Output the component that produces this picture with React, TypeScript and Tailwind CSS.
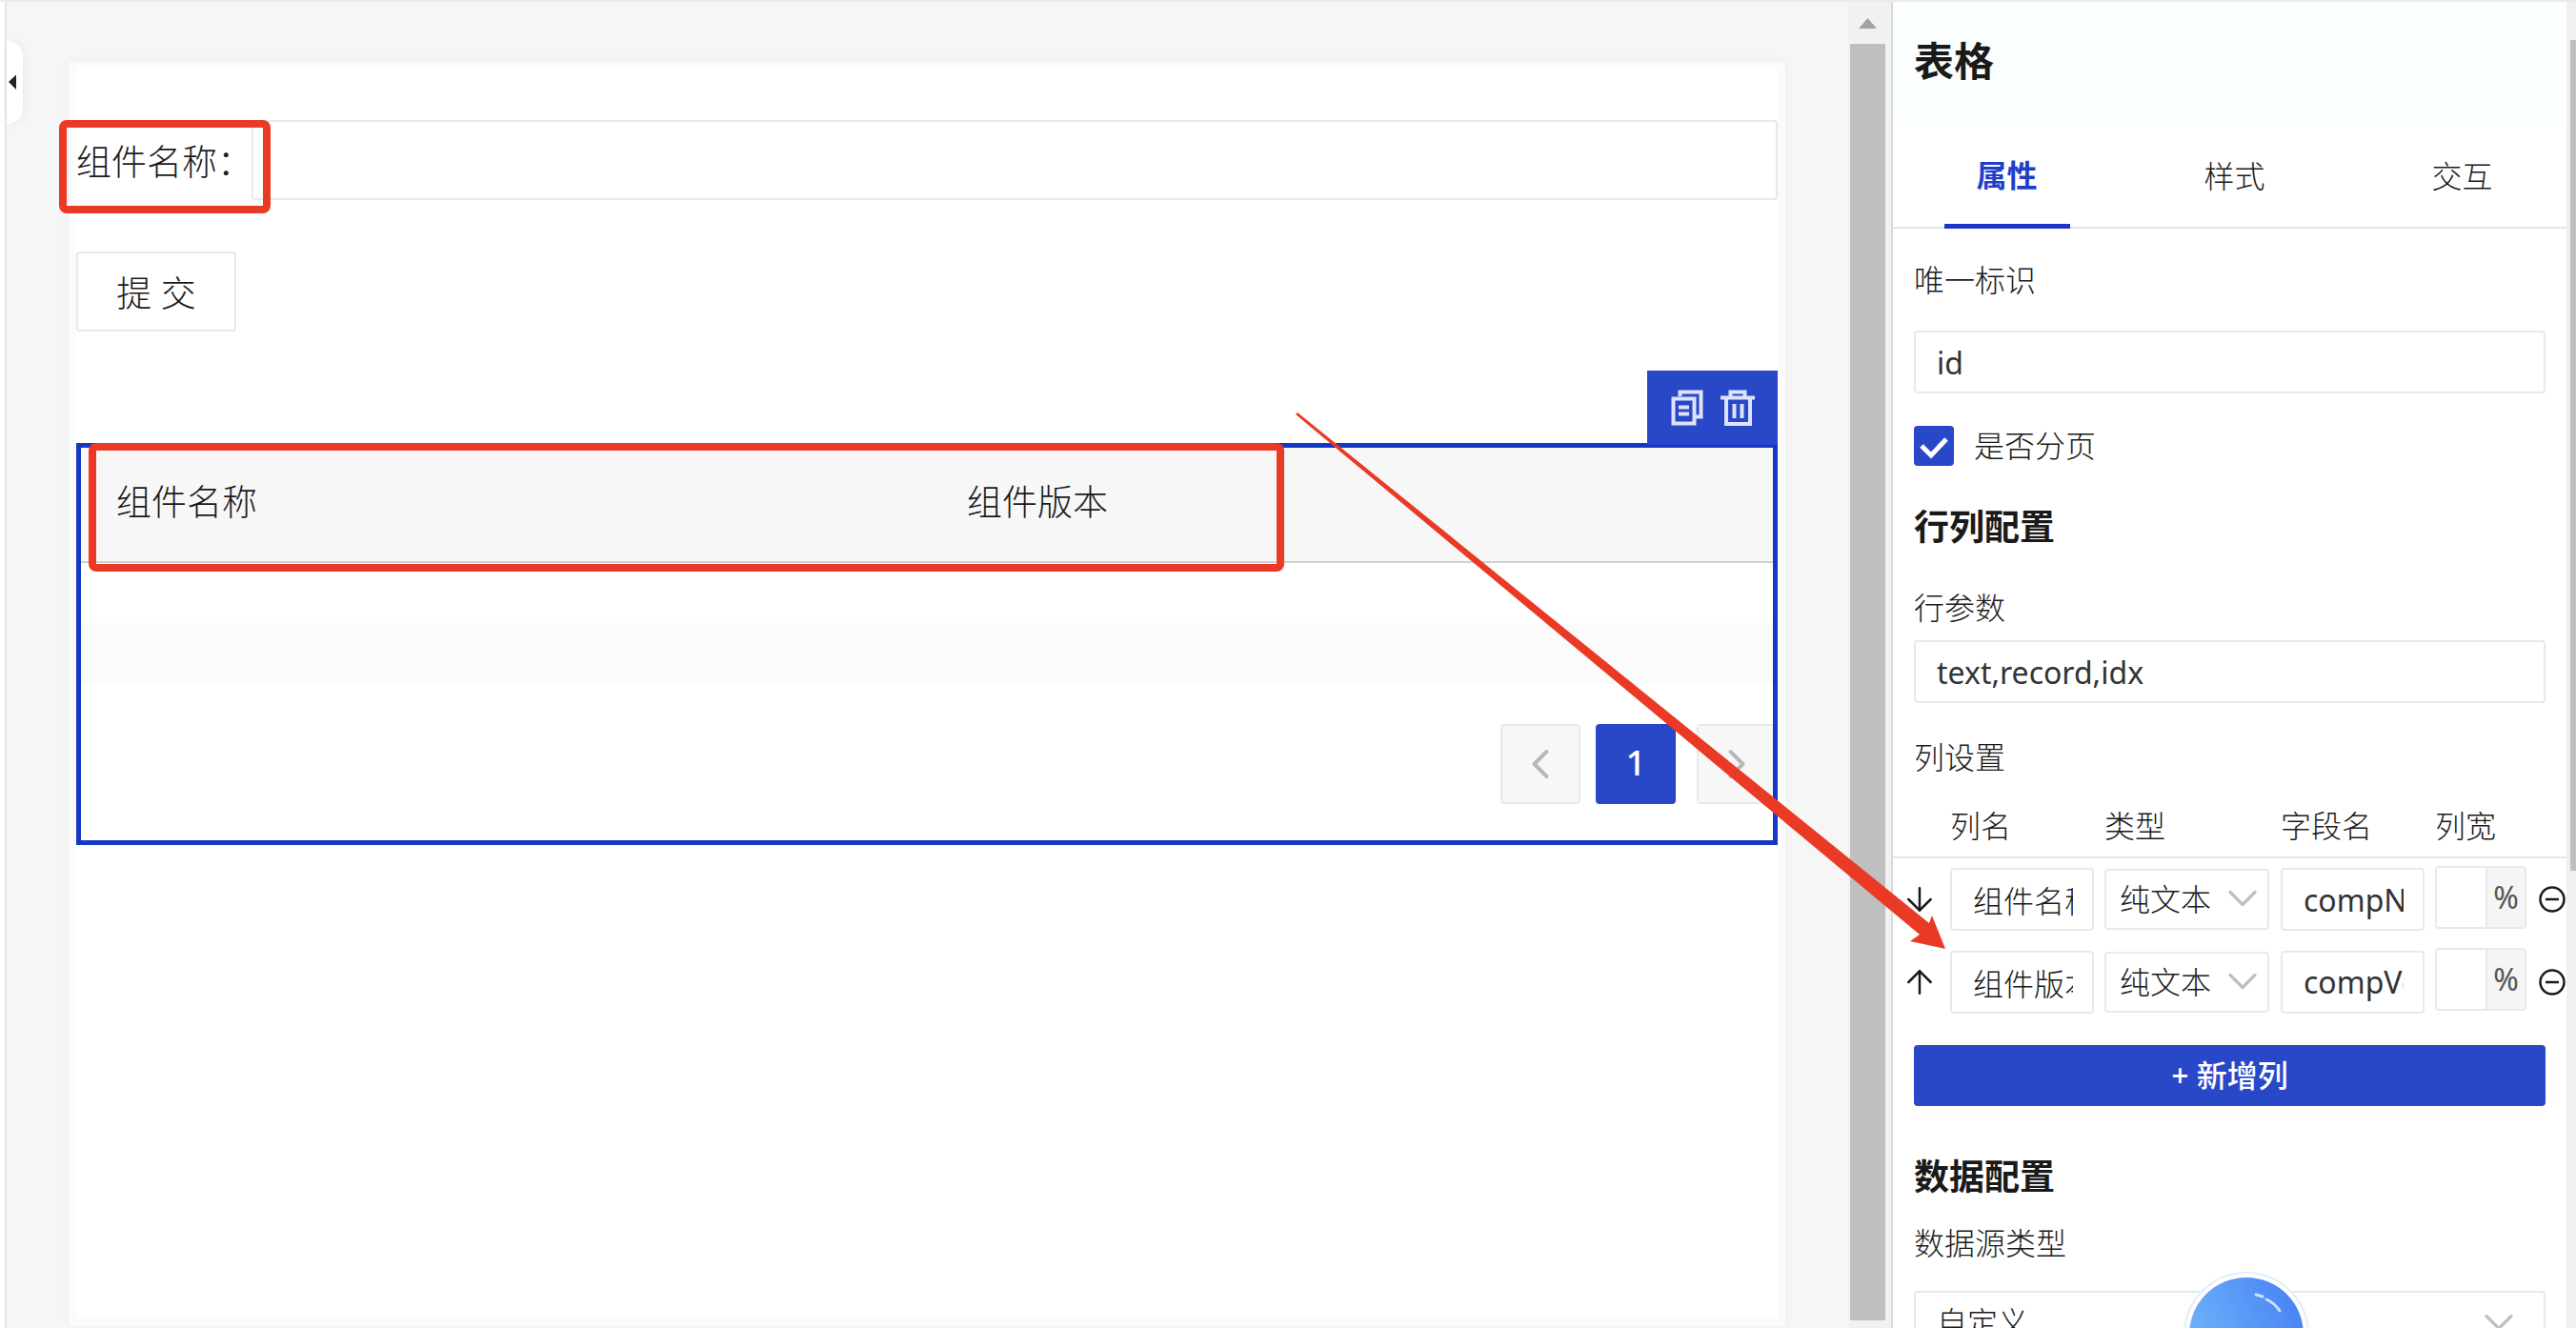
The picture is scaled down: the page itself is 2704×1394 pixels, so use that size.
import { ArrowDown, ArrowUp, ChevronDown, ChevronLeft, ChevronRight } from "lucide-react";
import { useState } from "react";

type Column = { title: string; field: string; first: boolean };

const columns: Column[] = [
  { title: "组件名称", field: "compName", first: true },
  { title: "组件版本", field: "compVersion", first: false },
];

const tabs = ["属性", "样式", "交互"];

function CopyIcon() {
  return (
    <svg viewBox="0 0 34 38" className="h-[38px] w-[34px]" fill="none" stroke="#dde3fb" strokeWidth="4">
      <path d="M9.5 7V2.5H31.5V28.500H26" />
      <rect x="2.500" y="9.500" width="22" height="26" />
      <path d="M8 18.500H19M8 25.500H19" />
    </svg>
  );
}

function TrashIcon() {
  return (
    <svg viewBox="0 0 36 38" className="h-[38px] w-[36px]" fill="none" stroke="#dde3fb" strokeWidth="4">
      <path d="M0 8.500H36M10.500 8V2.500H25.500V8" />
      <path d="M6 8V36H31V8" />
      <path d="M14.500 15V30M22.500 15V30" />
    </svg>
  );
}

function MinusCircle() {
  return (
    <svg viewBox="0 0 28 28" className="size-7" fill="none" stroke="#1a1a1a" strokeWidth="2.5">
      <circle cx="14" cy="14" r="12.500" />
      <path d="M7 14H21" />
    </svg>
  );
}

function SelectBox({ label, value, className, textClass, iconClass }: { label: string; value: string; className: string; textClass: string; iconClass: string }) {
  return (
    <div className={"relative rounded-sm border-2 border-[#e9e9e9] bg-white " + className}>
      <select aria-label={label} className={"h-full w-full appearance-none bg-transparent outline-none " + textClass}>
        <option>{value}</option>
      </select>
      <ChevronDown className={"pointer-events-none absolute size-[52px] text-[#bfbfbf] " + iconClass} strokeWidth={1.5} />
    </div>
  );
}

function Canvas() {
  return (
    <main className="relative flex h-full min-w-0 flex-1 border-l-2 border-[#e6e6e6] bg-[#f6f6f6]">
      <button aria-label="收起" className="absolute top-[41px] left-0 h-[87px] w-[17px] rounded-r-2xl bg-white shadow-[2px_0_10px_rgba(0,0,0,0.05)]">
        <svg viewBox="0 0 17 87" className="h-full w-full">
          <path d="M2 43L10 35.500V51Z" fill="#222" />
        </svg>
      </button>
      <div className="mt-[63px] mr-[66px] mb-[2px] ml-[65px] flex min-w-0 flex-1 flex-col border-8 border-t-[6px] border-[#fbfbfb] bg-white shadow-[0_0_10px_rgba(0,0,0,0.04)]">
        <div className="relative mt-[55px] flex h-[84px] items-center">
          <label htmlFor="comp" className="w-[184px] shrink-0 pt-[3px] whitespace-nowrap">组件名称：</label>
          <input id="comp" className="h-full min-w-0 flex-1 rounded-sm border-2 border-[#e9e9e9] px-4 outline-none" />
          <div className="pointer-events-none absolute top-0 -left-[18px] h-[98px] w-[222px] rounded-lg border-8 border-[#ea3a26]" />
        </div>
        <button className="mt-[54px] h-[84px] w-[168px] rounded-sm border-2 border-[#e9e9e9] bg-white pt-[3px]">提 交</button>
        <section className="relative mt-[117px] h-[422px] border-[5px] border-[#1539c4]">
          <div className="absolute -top-[81px] -right-[5px] flex h-[78px] w-[137px] items-center justify-center gap-[18px] bg-[#2948c8]">
            <button aria-label="复制"><CopyIcon /></button>
            <button aria-label="删除"><TrashIcon /></button>
          </div>
          <table className="w-full table-fixed text-left">
            <thead>
              <tr className="h-[120px] border-b-2 border-[#cfcfcf] bg-[#f7f7f7]">
                <th className="pl-[37px] font-light"><div className="pb-[6px]">组件名称</div></th>
                <th className="pl-[42px] font-light"><div className="pb-[6px]">组件版本</div></th>
              </tr>
            </thead>
            <tbody>
              <tr className="h-16"><td /><td /></tr>
              <tr className="h-16 bg-[#fbfbfb]"><td /><td /></tr>
            </tbody>
          </table>
          <nav aria-label="分页" className="mt-[42px] flex justify-end overflow-hidden">
            <button aria-label="上一页" className="mr-4 flex size-[84px] items-center justify-center rounded-sm border-2 border-[#e9e9e9] bg-[#f7f7f7]">
              <ChevronLeft className="size-[52px] text-[#b8b8b8]" strokeWidth={1.8} />
            </button>
            <button className="mr-[22px] size-[84px] rounded-sm bg-[#2948c8] pb-1 font-medium text-white">1</button>
            <button aria-label="下一页" className="-mr-1 flex size-[84px] items-center justify-center rounded-sm border-2 border-[#e9e9e9] bg-[#f7f7f7]">
              <ChevronRight className="size-[52px] text-[#b8b8b8]" strokeWidth={1.8} />
            </button>
          </nav>
          <div className="pointer-events-none absolute -top-[5px] left-[8px] h-[135px] w-[1255px] rounded-lg border-8 border-[#ea3a26]" />
        </section>
      </div>
      <div className="flex w-[47px] shrink-0 flex-col border-r-2 border-[#d9d9d9] bg-[#f1f1f1] pr-[6px] pb-2 pl-[2px]">
        <svg viewBox="0 0 37 44" className="h-[44px] w-[37px]">
          <path d="M9 28L18.500 17L28 28Z" fill="#a3a3a3" />
        </svg>
        <div className="flex-1 bg-[#bfbfbf]" />
      </div>
    </main>
  );
}

function ColumnRow({ column }: { column: Column }) {
  return (
    <tr className="h-[87px]">
      <td className="align-middle">
        <button aria-label={column.first ? "下移" : "上移"} className="ml-2 block">
          {column.first ? <ArrowDown className="size-10 text-[#1a1a1a]" strokeWidth={1.5} /> : <ArrowUp className="size-10 text-[#1a1a1a]" strokeWidth={1.5} />}
        </button>
      </td>
      <td>
        <div className="h-[66px] w-[151px] rounded-sm border-2 border-[#e9e9e9] pr-5 pl-[22px]">
          <input aria-label="列名" defaultValue={column.title} className="h-full w-full outline-none" />
        </div>
      </td>
      <td>
        <SelectBox label="类型" value="纯文本" className="h-16 w-[173px]" textClass="pl-[14px]" iconClass="top-[3px] right-0" />
      </td>
      <td>
        <div className="h-[66px] w-[151px] rounded-sm border-2 border-[#e9e9e9] pr-5 pl-[22px]">
          <input aria-label="字段名" defaultValue={column.field} className="h-full w-full font-normal text-[#333] outline-none" />
        </div>
      </td>
      <td className="align-top">
        <div className="mt-2 flex h-[66px] w-[96px] overflow-hidden rounded-sm border-2 border-[#e9e9e9]">
          <input aria-label="列宽" className="min-w-0 flex-1 outline-none" />
          <span className="flex w-[41px] items-center justify-center border-l-2 border-[#e9e9e9] bg-[#f5f5f5] font-normal text-[#555]">%</span>
        </div>
      </td>
      <td>
        <button aria-label="删除列" className="block"><MinusCircle /></button>
      </td>
    </tr>
  );
}

function Inspector() {
  const [tab, setTab] = useState("属性");
  return (
    <aside className="flex h-full w-[717px] shrink-0 bg-white text-[32px] leading-[48px]">
      <div className="min-w-0 flex-1 overflow-hidden">
        <header className="h-[125px] bg-[#fbfeff] px-[22px] pt-[30px]">
          <h1 className="text-[42px] leading-[64px] font-bold">表格</h1>
        </header>
        <div role="tablist" className="grid h-[113px] w-[717px] grid-cols-3 border-b-2 border-[#e6e6e6]">
          {tabs.map((name) => (
            <button
              key={name}
              role="tab"
              aria-selected={tab === name}
              onClick={() => setTab(name)}
              className={
                tab === name
                  ? "-mb-[2px] w-[132px] justify-self-center border-b-[5px] border-[#1a35c8] pt-[6px] font-bold text-[#1f3fcb]"
                  : "w-[132px] justify-self-center pt-1"
              }
            >
              {name}
            </button>
          ))}
        </div>
        <div className="px-[22px]">
          <label htmlFor="uid" className="mt-[30px] block">唯一标识</label>
          <input id="uid" defaultValue="id" className="mt-[29px] block h-[66px] w-full rounded-sm border-2 border-[#e9e9e9] px-[22px] font-normal text-[#333] outline-none" />
          <label className="relative mt-[31px] flex items-center gap-[21px]">
            <input type="checkbox" defaultChecked className="peer size-[42px] appearance-none rounded-sm bg-white checked:bg-[#2948c8]" />
            <svg viewBox="0 0 42 42" className="pointer-events-none absolute left-0 size-[42px] opacity-0 peer-checked:opacity-100" fill="none" stroke="#fff" strokeWidth="5">
              <path d="M8 21L18 31L34 14" />
            </svg>
            <span>是否分页</span>
          </label>
          <h2 className="mt-[33px] text-[37px] leading-[56px] font-bold">行列配置</h2>
          <label htmlFor="args" className="mt-[33px] block">行参数</label>
          <input id="args" defaultValue="text,record,idx" className="mt-[10px] block h-[66px] w-full rounded-sm border-2 border-[#e9e9e9] px-[22px] font-normal text-[#333] outline-none" />
          <p className="mt-[33px]">列设置</p>
        </div>
        <table className="mt-[20px] w-full table-fixed text-left">
          <colgroup>
            <col className="w-[60px]" />
            <col className="w-[162px]" />
            <col className="w-[185px]" />
            <col className="w-[162px]" />
            <col className="w-[109px]" />
            <col />
          </colgroup>
          <thead>
            <tr className="border-b-2 border-[#e6e6e6]">
              <td />
              <th className="pt-1 pb-2 font-light">列名</th>
              <th className="pt-1 pb-2 font-light">类型</th>
              <th className="pt-1 pb-2 font-light">字段名</th>
              <th className="pt-1 pb-2 font-light">列宽</th>
              <td />
            </tr>
          </thead>
          <tbody>
            {columns.map((c) => (
              <ColumnRow key={c.field} column={c} />
            ))}
          </tbody>
        </table>
        <div className="px-[22px]">
          <button className="mt-[23px] block h-16 w-full rounded-sm bg-[#2948c8] font-medium text-white">+ 新增列</button>
          <h2 className="mt-[46px] text-[37px] leading-[56px] font-bold">数据配置</h2>
          <p className="mt-[18px]">数据源类型</p>
          <SelectBox label="数据源类型" value="自定义" className="mt-[26px] h-[66px]" textClass="pl-[22px]" iconClass="top-[5px] right-[21px]" />
        </div>
      </div>
      <div className="w-[10px] shrink-0 bg-[#f0f0f0] pt-[40px] pl-[4px]">
        <div className="h-[872px] bg-[#bfbfbf]" />
      </div>
    </aside>
  );
}

export default function App() {
  return (
    <div className="relative flex h-screen overflow-hidden border-t-2 border-[#ebebeb] bg-white pl-[5px] font-['Noto_Sans','Noto_Sans_CJK_SC',sans-serif] text-[37px] leading-[56px] font-light text-[#1a1a1a]">
      <Canvas />
      <Inspector />
      <svg viewBox="0 0 132 132" className="absolute right-[280px] -bottom-[73px] size-[132px]">
        <defs>
          <linearGradient id="ball" x1="0" y1="0.600" x2="0.900" y2="0.200">
            <stop offset="0" stopColor="#6fb4fa" />
            <stop offset="1" stopColor="#4a86f5" />
          </linearGradient>
        </defs>
        <circle cx="66" cy="66" r="65" fill="#fff" stroke="#e3edf8" strokeWidth="2" />
        <circle cx="66" cy="66" r="60" fill="url(#ball)" />
        <path d="M76 24L83 26M87 29Q96 33 101 41" stroke="#cfe2ff" strokeWidth="3" strokeLinecap="round" fill="none" />
      </svg>
      <svg viewBox="0 0 682 564" className="pointer-events-none absolute top-[431px] right-[662px] h-[564px] w-[682px]">
        <path d="M0 2L2 0L665 536L668 528L682 563L645 555L655 548Z" fill="#ea3a26" />
      </svg>
    </div>
  );
}
